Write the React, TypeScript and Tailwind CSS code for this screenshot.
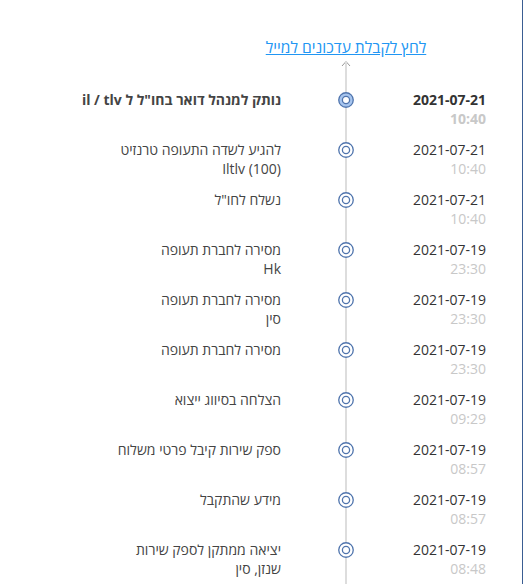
import React from 'react';

type Step = {
  date: string;
  time: string;
  lines: React.ReactNode[];
  active?: boolean;
};

const steps: Step[] = [
  {
    date: '2021-07-21',
    time: '10:40',
    lines: [
      <>
        נותק למנהל דואר בחו"ל ל <span dir="ltr">il / tlv</span>
      </>,
    ],
    active: true,
  },
  { date: '2021-07-21', time: '10:40', lines: ['להגיע לשדה התעופה טרנזיט', <span dir="ltr">Iltlv (100)</span>] },
  { date: '2021-07-21', time: '10:40', lines: ['נשלח לחו"ל'] },
  { date: '2021-07-19', time: '23:30', lines: ['מסירה לחברת תעופה', <span dir="ltr">Hk</span>] },
  { date: '2021-07-19', time: '23:30', lines: ['מסירה לחברת תעופה', 'סין'] },
  { date: '2021-07-19', time: '23:30', lines: ['מסירה לחברת תעופה'] },
  { date: '2021-07-19', time: '09:29', lines: ['הצלחה בסיווג ייצוא'] },
  { date: '2021-07-19', time: '08:57', lines: ['ספק שירות קיבל פרטי משלוח'] },
  { date: '2021-07-19', time: '08:57', lines: ['מידע שהתקבל'] },
  { date: '2021-07-19', time: '08:48', lines: ['יציאה ממתקן לספק שירות', 'שנזן, סין'] },
];

function Dot({ active }: { active?: boolean }) {
  return (
    <svg width="16" height="16" viewBox="0 0 16 16" className="shrink-0">
      <circle cx="8" cy="8" r="7.25" fill={active ? '#a7c5ee' : '#ffffff'} stroke="#4f74ad" strokeWidth="1.3" />
      <circle cx="8" cy="8" r="3.6" fill="#ffffff" stroke="#4f74ad" strokeWidth="1.3" />
    </svg>
  );
}

function Row({ step }: { step: Step }) {
  return (
    <div className="flex h-[50px]">
      <div className={`w-[120px] text-right ${step.active ? 'font-bold' : ''}`}>
        <div className="text-[#333333]">{step.date}</div>
        <div className="text-[#c8c8c8]">{step.time}</div>
      </div>
      <div className="w-[40px] flex flex-col items-center">
        <div className="w-[2px] h-[2px] bg-[#dddddd]" />
        <Dot active={step.active} />
        <div className="w-[2px] flex-1 bg-[#dddddd]" />
      </div>
      <div className={`flex-1 pr-[45px] text-[#444444] whitespace-nowrap ${step.active ? 'font-bold' : ''}`}>
        {step.lines.map((l, i) => (
          <div key={i}>{l}</div>
        ))}
      </div>
    </div>
  );
}

export default function App() {
  return (
    <div
      dir="rtl"
      className="w-[523px] h-[584px] overflow-hidden bg-white border-r border-[#3a5d92] pr-[36px] text-[14px] leading-[19px] font-['Open_Sans','DejaVu_Sans',sans-serif]"
    >
      <div className="flex h-[90px]">
        <div className="w-[120px]" />
        <div className="w-[40px] flex flex-col items-center pt-[38px]">
          <div className="flex justify-center w-full">
            <a href="#" className="whitespace-nowrap text-[#2196f3] underline text-[15.6px]">
              לחץ לקבלת עדכונים למייל
            </a>
          </div>
          <svg width="10" height="8" viewBox="0 0 10 8" className="mt-[3px] shrink-0">
            <polyline points="1,6 5,1.5 9,6" fill="none" stroke="#999999" strokeWidth="1" />
            <line x1="5" y1="1.5" x2="5" y2="8" stroke="#dddddd" strokeWidth="2" />
          </svg>
          <div className="w-[2px] flex-1 bg-[#dddddd]" />
        </div>
        <div className="flex-1" />
      </div>
      {steps.map((s, i) => (
        <Row key={i} step={s} />
      ))}
    </div>
  );
}
